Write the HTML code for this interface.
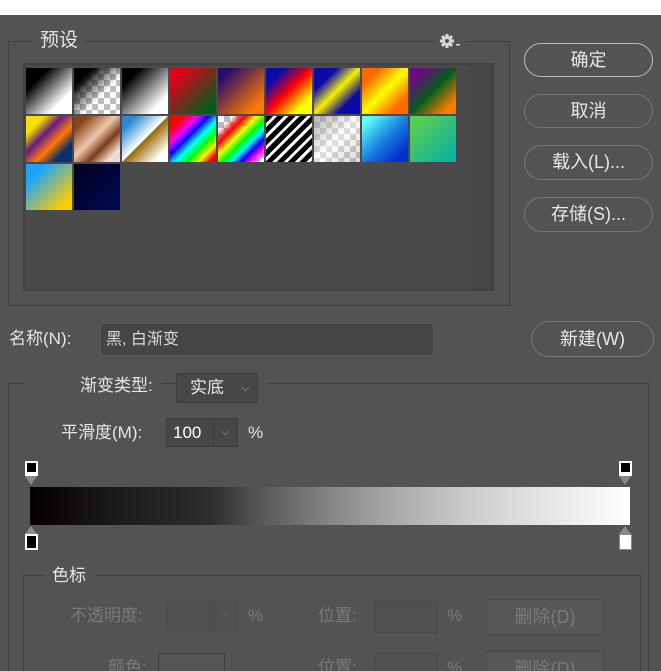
<!DOCTYPE html>
<html style="width:661px;height:671px;overflow:hidden"><head><meta charset="utf-8"><style>
*{margin:0;padding:0;box-sizing:border-box}
body{width:661px;height:671px;background:#535353;position:relative;overflow:hidden;font-family:"Liberation Sans","Noto Sans CJK SC",sans-serif;color:#e6e6e6;font-size:17px}
.a{position:absolute}
.top{left:0;top:0;width:661px;height:15px;background:#fff}
.fs{border:1px solid #3f3f3f;}
.lbl{background:#535353;padding:0 6px;line-height:20px;white-space:nowrap}
.list{left:23px;top:63px;width:471px;height:228px;background:#4a4a4a;border:2px solid #414141}
.sb{left:470px;top:65px;width:22px;height:224px;background:#474747}
.sw{position:absolute;width:46px;height:46px}
.btn{position:absolute;border:1px solid #777;border-radius:18px;text-align:center;color:#e8e8e8;font-size:18px}
.chk{background-color:#fff;background-image:conic-gradient(#bdbdbd 25%,#fff 0 50%,#bdbdbd 0 75%,#fff 0);background-size:12px 12px}
.inp{background:#454545;border:1px solid #3c3c3c}
.dim{color:#7a7a7a}
.dbtn{position:absolute;border:1px solid #4a4a4a;background:#575757;color:#7a7a7a;text-align:center;font-size:18px;border-radius:2px}
</style></head><body>
<div class="a top"></div>

<div class="a fs" style="left:8px;top:41px;width:502px;height:265px"></div>
<div class="a lbl" style="left:34px;top:31px;font-size:19px">预设</div>
<div class="a" style="left:436px;top:30px;width:30px;height:22px;background:#535353"></div>
<svg class="a" style="left:440px;top:34px" width="24" height="16" viewBox="0 0 24 16"><g fill="#d8d8d8"><circle cx="7" cy="7" r="5"/><rect x="5.5" y="0" width="3" height="14"/><rect x="0" y="5.5" width="14" height="3"/><rect x="5.5" y="0" width="3" height="14" transform="rotate(45 7 7)"/><rect x="5.5" y="0" width="3" height="14" transform="rotate(-45 7 7)"/></g><circle cx="7" cy="7" r="2" fill="#535353"/><rect x="16" y="10" width="4" height="1.5" fill="#d8d8d8"/></svg>

<div class="a list"></div>
<div class="a sb"></div>
<div class="a" style="left:0;top:0">
<div class="sw" style="left:26px;top:68px;background:linear-gradient(135deg,#000 25%,#fff 75%)"></div>
<div class="sw chk" style="left:74px;top:68px"><div style="width:100%;height:100%;background:linear-gradient(135deg,#000 20%,rgba(0,0,0,0) 60%)"></div></div>
<div class="sw" style="left:122px;top:68px;background:linear-gradient(135deg,#000 20%,#fff 80%)"></div>
<div class="sw" style="left:170px;top:68px;background:linear-gradient(135deg,#e0001a 15%,#055c1a 85%)"></div>
<div class="sw" style="left:218px;top:68px;background:linear-gradient(135deg,#2b0c6a 15%,#ff7a00 85%)"></div>
<div class="sw" style="left:266px;top:68px;background:linear-gradient(135deg,#0c0aa8 20%,#ff0000 50%,#ffff00 80%)"></div>
<div class="sw" style="left:314px;top:68px;background:linear-gradient(135deg,#0c0aa8 25%,#f5f000 50%,#0c0aa8 75%)"></div>
<div class="sw" style="left:362px;top:68px;background:linear-gradient(135deg,#ff6a00 20%,#ffff00 50%,#ff6a00 80%)"></div>
<div class="sw" style="left:410px;top:68px;background:linear-gradient(135deg,#6a0a80 15%,#055c1a 50%,#ff7a00 85%)"></div>

<div class="sw" style="left:26px;top:116px;background:linear-gradient(135deg,#f7e000 20%,#6a1a80 40%,#ff7a00 60%,#08306e 80%)"></div>
<div class="sw" style="left:74px;top:116px;background:linear-gradient(135deg,#8a4418 15%,#f0c8b0 45%,#7a3a18 65%,#f0dcd0 85%)"></div>
<div class="sw" style="left:122px;top:116px;background:linear-gradient(135deg,#2a88d0 15%,#ffffff 49%,#9a6a00 51%,#ffffff 85%)"></div>
<div class="sw" style="left:170px;top:116px;background:linear-gradient(135deg,#ff0000 15%,#ff00ff 30%,#0000ff 42%,#00ffff 55%,#00ff00 68%,#ffff00 80%,#ff0000 92%)"></div>
<div class="sw chk" style="left:218px;top:116px"><div style="width:100%;height:100%;background:linear-gradient(135deg,rgba(255,0,0,0) 15%,#ff0000 30%,#ffff00 42%,#00ff00 54%,#00ffff 64%,#0000ff 74%,#ff00ff 84%,rgba(255,0,255,0) 95%)"></div></div>
<div class="sw" style="left:266px;top:116px;background:repeating-linear-gradient(135deg,#000 0 5px,#fff 5px 8px)"></div>
<div class="sw chk" style="left:314px;top:116px"><div style="width:100%;height:100%;background:linear-gradient(135deg,rgba(128,128,128,.6),rgba(255,255,255,.5),rgba(128,128,128,.3))"></div></div>
<div class="sw" style="left:362px;top:116px;background:linear-gradient(135deg,#60ffff 10%,#1a80e0 50%,#0030c8 85%)"></div>
<div class="sw" style="left:410px;top:116px;background:linear-gradient(135deg,#58d050 10%,#10b0a0 90%)"></div>

<div class="sw" style="left:26px;top:164px;background:linear-gradient(135deg,#1aa4ff 20%,#ffcc00 85%)"></div>
<div class="sw" style="left:74px;top:164px;background:linear-gradient(135deg,#000020 10%,#000a50 90%)"></div>
</div>

<div class="btn" style="left:524px;top:43px;width:129px;height:34px;line-height:32px;border-color:#bdbdbd">确定</div>
<div class="btn" style="left:524px;top:94px;width:129px;height:34px;line-height:32px">取消</div>
<div class="btn" style="left:524px;top:145px;width:129px;height:35px;line-height:33px">载入(L)...</div>
<div class="btn" style="left:524px;top:197px;width:129px;height:35px;line-height:33px">存储(S)...</div>

<div class="a" style="left:9px;top:327px;line-height:24px">名称(N):</div>
<div class="a inp" style="left:100px;top:323px;width:334px;height:33px;font-size:16px;line-height:31px;padding-left:5px;color:#d8d8d8;border-color:#5a5a5a">黑, 白渐变</div>
<div class="btn" style="left:531px;top:321px;width:123px;height:36px;line-height:34px">新建(W)</div>

<div class="a fs" style="left:8px;top:383px;width:641px;height:300px"></div>
<div class="a lbl" style="left:24px;top:374px;padding:0 8px 0 56px;line-height:24px">渐变类型:</div>
<div class="a inp" style="left:176px;top:373px;width:82px;height:30px;line-height:28px;padding-left:13px;background:#474747">实底<span style="position:absolute;left:64px;top:0;font-size:11px;color:#bbb">⌵</span></div>
<div class="a lbl" style="left:258px;top:374px;width:10px;height:20px;padding:0"></div>

<div class="a" style="left:61px;top:421px;line-height:24px">平滑度(M):</div>
<div class="a inp" style="left:166px;top:418px;width:72px;height:29px;line-height:27px;padding-left:6px;color:#fff;background:#474747">100<span style="position:absolute;left:46px;top:0;width:1px;height:27px;background:#3a3a3a"></span><span style="position:absolute;left:54px;top:0;font-size:11px;color:#aaa">⌵</span></div>
<div class="a" style="left:248px;top:421px;line-height:24px">%</div>

<div class="a" style="left:25px;top:461px;width:13px;height:15px;background:#fff;padding:2px"><div style="width:9px;height:9px;background:#000"></div></div>
<div class="a" style="left:25px;top:476px;width:0;height:0;border-left:6.5px solid transparent;border-right:6.5px solid transparent;border-top:9px solid #8a8a8a"></div>
<div class="a" style="left:619px;top:461px;width:13px;height:15px;background:#fff;padding:2px"><div style="width:9px;height:9px;background:#000"></div></div>
<div class="a" style="left:619px;top:476px;width:0;height:0;border-left:6.5px solid transparent;border-right:6.5px solid transparent;border-top:9px solid #8a8a8a"></div>

<div class="a" style="left:30px;top:487px;width:600px;height:38px;background:linear-gradient(90deg,#050000,#1e1c1b 15%,#2e2d2c 30%,#555 38%,#7a7a7a 47%,#a8a8a8 60%,#d0d0d0 75%,#ececec 90%,#fff)"></div>

<div class="a" style="left:25px;top:526px;width:0;height:0;border-left:6.5px solid transparent;border-right:6.5px solid transparent;border-bottom:8px solid #8a8a8a"></div>
<div class="a" style="left:25px;top:534px;width:13px;height:16px;background:#fff;padding:2px"><div style="width:9px;height:12px;background:#000"></div></div>
<div class="a" style="left:619px;top:526px;width:0;height:0;border-left:6.5px solid transparent;border-right:6.5px solid transparent;border-bottom:8px solid #8a8a8a"></div>
<div class="a" style="left:619px;top:534px;width:13px;height:16px;background:#fff;border:1px solid #888"></div>

<div class="a fs" style="left:23px;top:575px;width:618px;height:120px"></div>
<div class="a lbl" style="left:44px;top:565px;padding:0 8px;line-height:22px">色标</div>

<div class="a dim" style="left:70px;top:604px;line-height:24px">不透明度:</div>
<div class="a inp" style="left:166px;top:601px;width:72px;height:30px;background:#505050;border-color:#4a4a4a"><span style="position:absolute;left:46px;top:0;width:1px;height:28px;background:#4a4a4a"></span><span style="position:absolute;left:54px;top:6px;font-size:10px;color:#777">⌵</span></div>
<div class="a dim" style="left:248px;top:604px;line-height:24px">%</div>
<div class="a dim" style="left:318px;top:604px;line-height:24px">位置:</div>
<div class="a inp" style="left:374px;top:601px;width:64px;height:32px;background:#505050;border-color:#484848"></div>
<div class="a dim" style="left:447px;top:604px;line-height:24px">%</div>
<div class="dbtn" style="left:486px;top:599px;width:118px;height:36px;line-height:34px">删除(D)</div>

<div class="a dim" style="left:108px;top:656px;line-height:24px">颜色:</div>
<div class="a" style="left:158px;top:653px;width:67px;height:30px;border:1px solid #3c3c3c;background:#555"></div>
<div class="a dim" style="left:318px;top:656px;line-height:24px">位置:</div>
<div class="a inp" style="left:374px;top:653px;width:64px;height:32px;background:#505050;border-color:#484848"></div>
<div class="a dim" style="left:447px;top:656px;line-height:24px">%</div>
<div class="dbtn" style="left:486px;top:651px;width:118px;height:36px;line-height:34px">删除(D)</div>
</body></html>
